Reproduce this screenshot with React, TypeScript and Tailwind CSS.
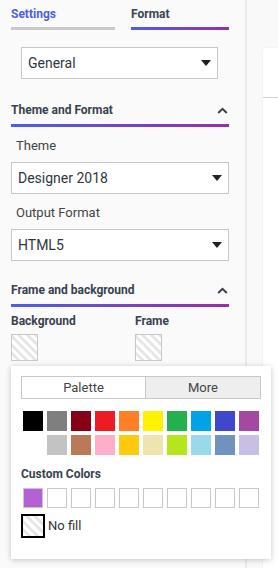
import { ReactNode } from 'react';

const hatch =
  'bg-[repeating-linear-gradient(45deg,#ffffff_0px,#ffffff_3px,#e6e6e6_3px,#e6e6e6_6px)]';

const paletteRow1 = ['#000000', '#7f7f7f', '#880015', '#ed1c24', '#ff7f27', '#fff200', '#22b14c', '#00a2e8', '#3f48cc', '#a349a4'];
const paletteRow2 = ['', '#c3c3c3', '#b97a57', '#ffaec9', '#ffc90e', '#efe4b0', '#b5e61d', '#99d9ea', '#7092be', '#c8bfe7'];

const Caret = () => (
  <svg width="10" height="6" viewBox="0 0 10 6" className="shrink-0">
    <path d="M0 0 L10 0 L5 6 Z" fill="#222" />
  </svg>
);

const Select = ({ value, className }: { value: string; className: string }) => (
  <div className={`flex items-center justify-between h-8 border border-[#c8c8c8] bg-white pl-[6px] pr-[6px] ${className}`}>
    <span className="text-[14px] text-[#2f3640] leading-4">{value}</span>
    <Caret />
  </div>
);

const SectionHeader = ({ title, className }: { title: string; className: string }) => (
  <div className={className}>
    <div className="flex items-center justify-between h-4">
      <span className="text-[12px] font-bold text-[#37424f] leading-4">{title}</span>
      <svg width="11" height="7" viewBox="0 0 11 7" className="mr-px">
        <path d="M1.2 6 L5.5 1.8 L9.8 6" fill="none" stroke="#37424f" strokeWidth="2" />
      </svg>
    </div>
    <div className="mt-[6px] h-[3px] bg-[linear-gradient(90deg,#4a5fe8,#9a2ea6)]" />
  </div>
);

const Label = ({ children, className }: { children: ReactNode; className: string }) => (
  <div className={`pl-[5px] text-[13px] leading-4 text-[#444] ${className}`}>{children}</div>
);

export default function App() {
  return (
    <div className="relative flex w-[278px] h-[568px] overflow-hidden bg-[#fafafa] font-['Roboto',sans-serif]">
      {/* left panel */}
      <div className="w-[245px] shrink-0 pl-[11px] pr-4">
        <div className="flex gap-4 pt-[6px]">
          <div className="w-[104px]">
            <div className="text-[12px] font-bold leading-4 text-[#4b5fe4]">Settings</div>
            <div className="mt-[5px] h-[3px] bg-[#c9c9c9]" />
          </div>
          <div className="w-[98px]">
            <div className="text-[12px] font-bold leading-4 text-[#3b4450]">Format</div>
            <div className="mt-[5px] h-[3px] bg-[linear-gradient(90deg,#4a5fe8,#9a2ea6)]" />
          </div>
        </div>

        <Select value="General" className="mt-[17px] ml-[10px] mr-[11px]" />

        <SectionHeader title="Theme and Format" className="mt-[23px]" />
        <Label className="mt-[11px]">Theme</Label>
        <Select value="Designer 2018" className="mt-2" />
        <Label className="mt-[11px]">Output Format</Label>
        <Select value="HTML5" className="mt-2" />

        <SectionHeader title="Frame and background" className="mt-[21px]" />
        <div className="flex mt-[6px]">
          <div className="w-[124px]">
            <div className="text-[12px] font-bold leading-4 text-[#37424f]">Background</div>
            <div className={`mt-[5px] w-[27px] h-[27px] border border-[#c8c8c8] ${hatch}`} />
          </div>
          <div>
            <div className="text-[12px] font-bold leading-4 text-[#37424f]">Frame</div>
            <div className={`mt-[5px] w-[27px] h-[27px] border border-[#c8c8c8] ${hatch}`} />
          </div>
        </div>
      </div>

      {/* divider + right area */}
      <div className="w-[2px] bg-[#ececec] shrink-0" />
      <div className="flex-1 pl-4 pt-12 bg-[#f9f9f9]">
        <div className="h-full bg-white rounded-tl-[4px] shadow-[0_0_2px_rgba(0,0,0,0.08)]">
          <div className="h-[50px] border-b border-[#d0d0d0]" />
        </div>
      </div>

      {/* color picker popup */}
      <div className="absolute left-[11px] top-[366px] w-[260px] h-[193px] bg-white shadow-[0_1px_6px_rgba(0,0,0,0.22)] px-[10px] pt-[10px]">
        <div className="flex h-[23px] border border-[#c8c8c8] text-[13px] text-[#444]">
          <div className="w-[124px] flex items-center justify-center bg-white border-r border-[#c8c8c8]">Palette</div>
          <div className="flex-1 flex items-center justify-center bg-[#eeeeee]">More</div>
        </div>

        <div className="mt-3 ml-[2px] grid grid-cols-10 gap-1 w-[236px]">
          {paletteRow1.map((c) => (
            <div key={c} className="w-5 h-5" style={{ backgroundColor: c }} />
          ))}
          {paletteRow2.map((c, i) => (
            <div key={i} className="w-5 h-5" style={{ backgroundColor: c || 'transparent' }} />
          ))}
        </div>

        <div className="mt-[11px] text-[12px] font-bold leading-4 text-[#37424f]">Custom Colors</div>
        <div className="mt-[6px] ml-[2px] grid grid-cols-10 gap-1 w-[236px]">
          <div className="w-5 h-5 border border-[#c8c8c8] bg-[#b660d6]" />
          {Array.from({ length: 9 }).map((_, i) => (
            <div key={i} className="w-5 h-5 border border-[#c8c8c8] bg-white" />
          ))}
        </div>

        <div className="mt-[6px] flex items-center">
          <div className={`w-6 h-6 border-2 border-black ${hatch}`} />
          <span className="ml-[3px] text-[13px] text-[#333]">No fill</span>
        </div>
      </div>
    </div>
  );
}
